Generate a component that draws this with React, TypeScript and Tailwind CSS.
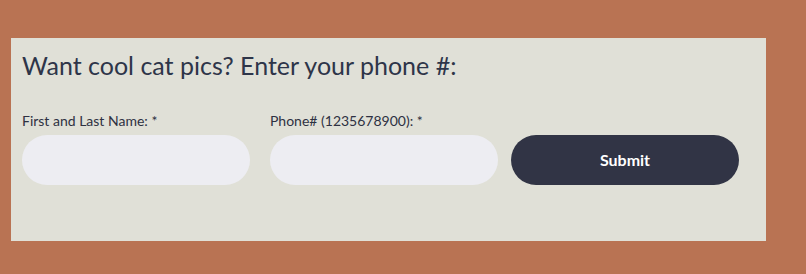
export default function App() {
  return (
    <div className="h-[274px] w-[806px] bg-[#b97353] pl-[11px] pt-[38px]" style={{ fontFamily: "Lato, 'Noto Sans', sans-serif" }}>
      <div className="h-[203px] w-[755px] bg-[#e0e0d7] pl-[11px] pt-[9px]">
        <h2 className="text-[25px] leading-[36px] font-normal text-[#2e3549]">Want cool cat pics? Enter your phone #:</h2>
        <form className="mt-[29px] flex items-end" onSubmit={(e) => e.preventDefault()}>
          <div className="flex w-[228px] flex-col">
            <label className="mb-[5px] text-[14px] leading-[18px] text-[#2e3142]">First and Last Name: *</label>
            <input className="h-[50px] w-full rounded-full bg-[#ededf2] px-5 outline-none" />
          </div>
          <div className="ml-[20px] flex w-[228px] flex-col">
            <label className="mb-[5px] text-[14px] leading-[18px] text-[#2e3142]">Phone# (1235678900): *</label>
            <input className="h-[50px] w-full rounded-full bg-[#ededf2] px-5 outline-none" />
          </div>
          <button type="submit" className="ml-[13px] h-[50px] w-[228px] rounded-full bg-[#313445] text-[16px] font-bold text-white">
            Submit
          </button>
        </form>
      </div>
    </div>
  );
}
